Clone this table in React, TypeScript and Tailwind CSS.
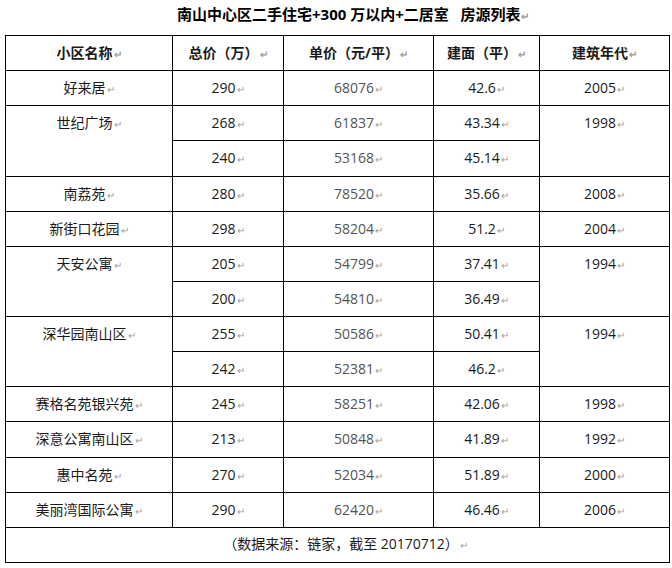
import React from "react";

const Mark = () => (
  <span className="text-[#a0a0a0] text-[10px] align-baseline ml-[1px]">↵</span>
);

type Cell = { t: string; rs?: number; gray?: boolean };

const rows: (Cell | null)[][] = [
  [{ t: "好来居" }, { t: "290" }, { t: "68076", gray: true }, { t: "42.6" }, { t: "2005" }],
  [{ t: "世纪广场", rs: 2 }, { t: "268" }, { t: "61837", gray: true }, { t: "43.34" }, { t: "1998", rs: 2 }],
  [null, { t: "240" }, { t: "53168", gray: true }, { t: "45.14" }, null],
  [{ t: "南荔苑" }, { t: "280" }, { t: "78520", gray: true }, { t: "35.66" }, { t: "2008" }],
  [{ t: "新街口花园" }, { t: "298" }, { t: "58204", gray: true }, { t: "51.2" }, { t: "2004" }],
  [{ t: "天安公寓", rs: 2 }, { t: "205" }, { t: "54799", gray: true }, { t: "37.41" }, { t: "1994", rs: 2 }],
  [null, { t: "200" }, { t: "54810", gray: true }, { t: "36.49" }, null],
  [{ t: "深华园南山区", rs: 2 }, { t: "255" }, { t: "50586", gray: true }, { t: "50.41" }, { t: "1994", rs: 2 }],
  [null, { t: "242" }, { t: "52381", gray: true }, { t: "46.2" }, null],
  [{ t: "赛格名苑银兴苑" }, { t: "245" }, { t: "58251", gray: true }, { t: "42.06" }, { t: "1998" }],
  [{ t: "深意公寓南山区" }, { t: "213" }, { t: "50848", gray: true }, { t: "41.89" }, { t: "1992" }],
  [{ t: "惠中名苑" }, { t: "270" }, { t: "52034", gray: true }, { t: "51.89" }, { t: "2000" }],
  [{ t: "美丽湾国际公寓" }, { t: "290" }, { t: "62420", gray: true }, { t: "46.46" }, { t: "2006" }],
];

const headers = ["小区名称", "总价（万）", "单价（元/平）", "建面（平）", "建筑年代"];

export default function App() {
  return (
    <div
      className="w-[672px] h-[568px] bg-white text-[#1a1a1a] overflow-hidden"
      style={{ fontFamily: '"Open Sans", "Noto Sans CJK SC", sans-serif' }}
    >
      <div className="h-[35px] pl-[177px] pt-[3px] leading-[22px] text-[15px] font-bold text-black whitespace-nowrap">
        南山中心区二手住宅+300 万以内+二居室&nbsp;&nbsp;&nbsp;房源列表
        <Mark />
      </div>
      <table className="ml-[5px] border-collapse table-fixed w-[664px] text-[14px]">
        <colgroup>
          <col className="w-[167px]" />
          <col className="w-[111px]" />
          <col className="w-[150px]" />
          <col className="w-[106px]" />
          <col className="w-[130px]" />
        </colgroup>
        <thead>
          <tr className="h-[35.13px]">
            {headers.map((h) => (
              <th
                key={h}
                className="border border-black font-bold text-center align-middle p-0 leading-[20px]"
              >
                {h}
                <Mark />
              </th>
            ))}
          </tr>
        </thead>
        <tbody>
          {rows.map((r, i) => (
            <tr key={i} className="h-[35.13px]">
              {r.map((c, j) =>
                c ? (
                  <td
                    key={j}
                    rowSpan={c.rs}
                    className={
                      "border border-black text-center align-top p-0 pt-[7px] leading-[20px] " +
                      (c.gray ? "text-[#555555]" : "")
                    }
                  >
                    {c.t}
                    <Mark />
                  </td>
                ) : null
              )}
            </tr>
          ))}
          <tr className="h-[35.13px]">
            <td colSpan={5} className="border border-black text-center align-middle p-0 pl-[16px] leading-[20px]">
              （数据来源：链家，截至 20170712）
              <Mark />
            </td>
          </tr>
        </tbody>
      </table>
    </div>
  );
}
